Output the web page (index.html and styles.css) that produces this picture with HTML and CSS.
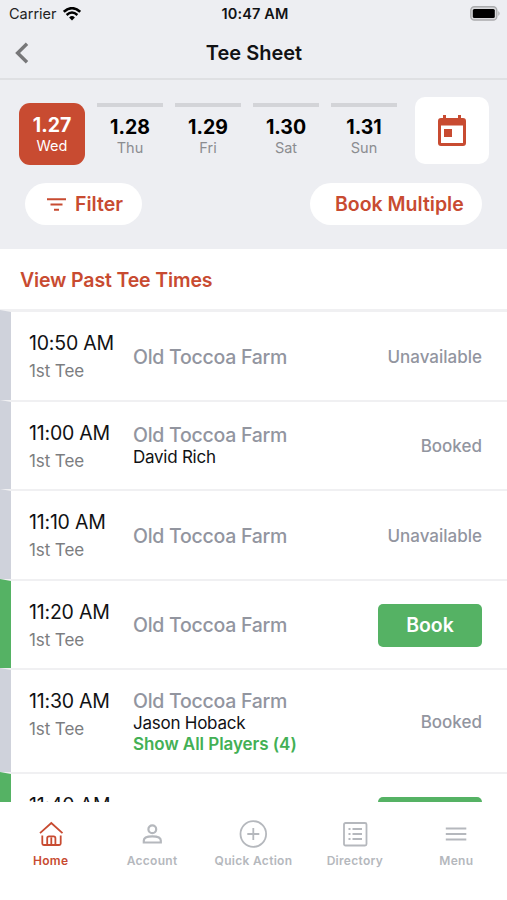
FILE: index.html
```html
<!DOCTYPE html>
<html lang="en">
<head>
<meta charset="utf-8">
<title>Tee Sheet</title>
<link rel="stylesheet" href="styles.css">
</head>
<body>
<div class="app">
  <header class="top">
    <div class="status">
      <div class="carrier"><span>Carrier</span>
        <svg width="18" height="14" viewBox="0 0 18 14"><path d="M.8 4.800Q9-2.400 17.200 4.800" fill="none" stroke="#000" stroke-width="2.600"/><path d="M3.600 8Q9 3.200 14.400 8" fill="none" stroke="#000" stroke-width="2.400"/><path d="M6.100 10.400Q9 7.800 11.900 10.400L9 13.500Z"/></svg>
      </div>
      <div class="clock">10:47 AM</div>
      <svg class="battery" width="31" height="15" viewBox="0 0 31 15"><rect x=".8" y=".8" width="26" height="13.200" rx="3.600" fill="#d9d9dc" stroke="#aaabad" stroke-width="1.400"/><rect x="2.800" y="3" width="22" height="9" rx="1.500"/><path d="M28.300 5Q31 7.500 28.300 10Z" fill="#aaabad"/></svg>
    </div>
    <div class="nav">
      <svg class="back" width="14" height="22" viewBox="0 0 14 22"><path d="M12 1.800 2.600 11 12 20.200" fill="none" stroke="#777779" stroke-width="3.400"/></svg>
      <h1 class="title">Tee Sheet</h1>
    </div>
  </header>

  <section class="controls">
    <div class="dates">
      <div class="day selected"><b>1.27</b><span>Wed</span></div>
      <div class="day"><b>1.28</b><span>Thu</span></div>
      <div class="day"><b>1.29</b><span>Fri</span></div>
      <div class="day"><b>1.30</b><span>Sat</span></div>
      <div class="day"><b>1.31</b><span>Sun</span></div>
      <div class="calendar"><svg width="28" height="31" viewBox="0 0 28 31"><path fill="#c84b31" fill-rule="evenodd" d="M5 0h3v3h12V0h3v3h2a3 3 0 0 1 3 3v22a3 3 0 0 1-3 3H3a3 3 0 0 1-3-3V6a3 3 0 0 1 3-3h2ZM3 10.500V28h22V10.500Z"/><path fill="#c84b31" d="M6 14h8v8H6Z"/></svg></div>
    </div>
    <div class="actions">
      <div class="pill filter"><svg width="19" height="13" viewBox="0 0 19 13"><path d="M0 1.200h19M3.500 6.500h12M7 11.800h5" stroke="#c84b31" stroke-width="2"/></svg><span>Filter</span></div>
      <div class="pill multiple"><span>Book Multiple</span></div>
    </div>
  </section>

  <main class="sheet">
    <div class="past"><span>View Past Tee Times</span></div>
    <div class="row"><div class="when"><div class="time">10:50 AM</div><div class="tee">1st Tee</div></div><div class="what"><div class="course">Old Toccoa Farm</div></div><div class="state">Unavailable</div></div>
    <div class="row"><div class="when"><div class="time">11:00 AM</div><div class="tee">1st Tee</div></div><div class="what"><div class="course">Old Toccoa Farm</div><div class="player">David Rich</div></div><div class="state">Booked</div></div>
    <div class="row"><div class="when"><div class="time">11:10 AM</div><div class="tee">1st Tee</div></div><div class="what"><div class="course">Old Toccoa Farm</div></div><div class="state">Unavailable</div></div>
    <div class="row open"><div class="when"><div class="time">11:20 AM</div><div class="tee">1st Tee</div></div><div class="what"><div class="course">Old Toccoa Farm</div></div><div class="book">Book</div></div>
    <div class="row tall"><div class="when"><div class="time">11:30 AM</div><div class="tee">1st Tee</div></div><div class="what"><div class="course">Old Toccoa Farm</div><div class="player">Jason Hoback</div><div class="more">Show All Players (4)</div></div><div class="state">Booked</div></div>
    <div class="row open last"><div class="when"><div class="time">11:40 AM</div></div><div class="what"></div><div class="book"></div></div>
  </main>

  <nav class="tabs">
    <div class="tab active"><svg width="28" height="28" viewBox="0 0 28 28"><path d="M3 13.200 14.300 3 25.500 13.200M5.300 15.500v8q0 1.500 1.500 1.500h15.400q1.500 0 1.500-1.500v-8M10.200 25v-6.800q0-1.800 1.800-1.800h4.600q1.800 0 1.800 1.800V25M14.300 17.500V25"/></svg><span>Home</span></div>
    <div class="tab account"><svg width="28" height="28" viewBox="0 0 28 28"><circle cx="14.300" cy="9.200" r="3.900"/><path d="M5.800 22.500v-1.900q0-4.300 8.500-4.300t8.500 4.300v1.900Z"/></svg><span>Account</span></div>
    <div class="tab"><svg width="28" height="28" viewBox="0 0 28 28"><circle cx="14.300" cy="14" r="12.800"/><path d="M14.300 8v12M8.300 14h12"/></svg><span>Quick Action</span></div>
    <div class="tab"><svg width="28" height="28" viewBox="0 0 28 28"><rect x="3" y="3" width="22.500" height="22.500" rx="1.500"/><path d="M7.500 9h2M11.500 9h9.500M7.500 14h2M11.500 14h9.500M7.500 19h2M11.500 19h9.500"/></svg><span>Directory</span></div>
    <div class="tab"><svg width="28" height="28" viewBox="0 0 28 28"><path d="M3.800 8.500h20.500M3.800 14h20.500M3.800 19.500h20.500"/></svg><span>Menu</span></div>
  </nav>
</div>
</body>
</html>
```
FILE: styles.css
```css
* { box-sizing: border-box; }
body { margin: 0; font-family: Inter, "Liberation Sans", sans-serif; background: #fff; color: #111214; }
svg { display: block; flex: none; }
.app { width: 507px; height: 900px; display: flex; flex-direction: column; overflow: hidden; white-space: nowrap; }

.top { height: 80px; background: #edeef2; border-bottom: 2px solid #dfe0e3; }
.status { height: 27px; display: grid; grid-template-columns: 1fr auto 1fr; align-items: center; padding: 0 6px 0 9px; }
.carrier { display: flex; gap: 6px; align-items: center; font-size: 14.500px; color: #222; }
.clock { font-size: 14.500px; font-weight: 600; letter-spacing: .15px; }
.battery { justify-self: end; }
.nav { height: 51px; display: grid; grid-template-columns: 1fr auto 1fr; align-items: center; padding: 0 14px 0 15px; }
.title { margin: 0; font-size: 20px; font-weight: 600; }

.controls { height: 169px; background: #edeef2; padding: 17px 18px 0 19px; }
.dates { display: flex; height: 68px; }
.day { width: 66px; height: 61px; margin: 6px 12px 0 0; border-top: 4px solid #d3d4d8; display: flex; flex-direction: column; align-items: center; padding-top: 9px; color: #000; }
.day b { font-size: 19.500px; line-height: 22px; font-weight: 700; }
.day span { font-size: 14.500px; line-height: 20px; color: #8b8c90; }
.day.selected { height: 62px; background: #c84b31; border: 0; border-radius: 11px; color: #fff; padding-top: 11px; }
.day.selected span { color: #fff; }
.calendar { width: 74px; height: 67px; margin-left: 6px; background: #fff; border-radius: 10px; display: flex; align-items: center; justify-content: center; }
.actions { display: flex; justify-content: space-between; padding: 18px 7px 0 6px; }
.pill { height: 42px; border-radius: 21px; background: #fff; color: #c84b31; font-size: 19.500px; font-weight: 600; display: flex; align-items: center; }
.filter { width: 117px; padding-left: 22px; gap: 9px; }
.multiple { width: 172px; padding-left: 25px; }

.sheet { height: 553px; overflow: hidden; flex: none; }
.past { height: 61px; padding: 1px 0 0 20px; border-bottom: 1px solid #f0f0f2; display: flex; align-items: center; color: #c84b31; font-size: 19.500px; font-weight: 600; letter-spacing: -.14px; }
.row { height: 89.500px; border-top: 2px solid #f0f0f2; border-left: 11px solid #cfd2db; display: grid; grid-template-columns: 104px 1fr auto; align-items: center; padding: 2px 25px 0 18px; }
.row.open { border-left-color: #55b264; }
.row.tall { height: 104px; }
.when { align-self: start; padding-top: 15px; }
.time { font-size: 19.500px; line-height: 28px; letter-spacing: -.2px; }
.tee { font-size: 17px; line-height: 28px; color: #7c7d80; letter-spacing: -.1px; }
.course { font-size: 19.500px; line-height: 22px; font-weight: 500; color: #92959f; letter-spacing: -.27px; }
.player { font-size: 17px; line-height: 21px; letter-spacing: -.25px; padding-top: 1px; }
.more { font-size: 17px; line-height: 21px; font-weight: 600; color: #43b055; letter-spacing: -.05px; }
.state { font-size: 17px; font-weight: 500; color: #92959f; }
.book { width: 104px; height: 43px; border-radius: 5px; background: #55b264; color: #fff; font-size: 19.500px; font-weight: 600; display: flex; align-items: center; justify-content: center; }

.tabs { height: 98px; background: #fff; display: grid; grid-template-columns: repeat(5, 1fr); padding-top: 18px; }
.tab { display: flex; flex-direction: column; align-items: center; gap: 5px; color: #b5b8bd; font-size: 12px; font-weight: 600; line-height: 16px; letter-spacing: .3px; }
.tab svg { fill: none; stroke: currentColor; stroke-width: 1.800; }
.tab.account svg { stroke-width: 2.200; }
.tab.active { color: #c84b31; }
```
